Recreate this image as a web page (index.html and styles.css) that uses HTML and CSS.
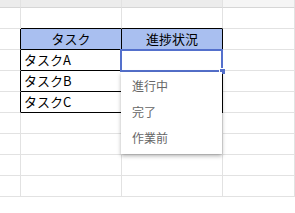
FILE: index.html
```html
<!DOCTYPE html>
<html lang="ja">
<head>
    <meta charset="UTF-8">
    <title>タスク 進捗状況</title>
    <link rel="stylesheet" href="styles.css">
</head>
<body>
    <div class="sheet">
        <div class="cell top"></div><div class="cell top"></div><div class="cell top"></div><div class="cell top last"></div>
        <div class="cell"></div><div class="cell above"></div><div class="cell above"></div><div class="cell"></div>

        <div class="cell side"></div><div class="cell head">タスク</div><div class="cell head">進捗状況</div><div class="cell"></div>
        <div class="cell side"></div><div class="cell task">タスクA</div><div class="cell task"></div><div class="cell"></div>
        <div class="cell side"></div><div class="cell task">タスクB</div><div class="cell task"></div><div class="cell"></div>
        <div class="cell side"></div><div class="cell task">タスクC</div><div class="cell task"></div><div class="cell"></div>

        <div class="cell"></div><div class="cell"></div><div class="cell"></div><div class="cell"></div>
        <div class="cell"></div><div class="cell"></div><div class="cell"></div><div class="cell"></div>
        <div class="cell"></div><div class="cell"></div><div class="cell"></div><div class="cell"></div>
        <div class="cell"></div><div class="cell"></div><div class="cell"></div><div class="cell"></div>

        <div class="selection"><span class="handle"></span></div>
        <ul class="dropdown">
            <li>進行中</li>
            <li>完了</li>
            <li>作業前</li>
        </ul>
    </div>
</body>
</html>
```

FILE: styles.css
```css
body {
    margin: 0;
    overflow: hidden;
    font-family: "Noto Sans CJK JP", "Noto Sans", sans-serif;
    background: #fff;
}

.sheet {
    position: relative;
    display: grid;
    grid-template-columns: 21px 101px 101px 1fr;
    grid-template-rows: 8px repeat(10, 21px);
    width: 295px;
}

.cell {
    border-right: 1px solid #e2e2e2;
    border-bottom: 1px solid #e2e2e2;
    font-size: 13px;
    line-height: 20px;
    color: #000;
    white-space: nowrap;
    overflow: hidden;
}

.top {
    background: #ececec;
    border-bottom-color: #d6d6d6;
}
.top.last {
    background: #f5f5f5;
}
/* black outline of the task table */
.above {
    border-bottom-color: #000;
}
.side {
    border-right-color: #000;
}

.head {
    background: #a9bff0;
    border-color: #000;
    text-align: center;
}
.task {
    border-color: #000;
    padding-left: 3px;
}

.selection {
    position: absolute;
    left: 120px;
    top: 49px;
    width: 99px;
    height: 19px;
    border: 2px solid #5470cc;
}
.handle {
    position: absolute;
    right: -4px;
    bottom: -4px;
    width: 5px;
    height: 5px;
    background: #5470cc;
    border: 1px solid #fff;
    border-width: 1px 0 0 1px;
}

.dropdown {
    position: absolute;
    left: 121px;
    top: 72px;
    width: 101px;
    height: 78px;
    margin: 0;
    padding: 4px 0 0;
    list-style: none;
    background: #fff;
    box-shadow: 0 2px 4px rgba(0, 0, 0, 0.3);
}
.dropdown li {
    padding-left: 11px;
    height: 26px;
    line-height: 20px;
    font-size: 12px;
    color: #666;
}
```
